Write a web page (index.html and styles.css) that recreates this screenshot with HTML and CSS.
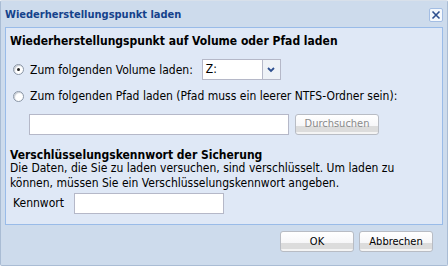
FILE: index.html
```html
<!DOCTYPE html>
<html>
<head>
<meta charset="utf-8">
<link rel="stylesheet" href="styles.css">
</head>
<body>
<div class="window">
  <div class="header">
    <span class="title">Wiederherstellungspunkt laden</span>
    <span class="close"><svg width="10" height="10" viewBox="0 0 10 10"><path d="M1.5 1.5 L8.5 8.5 M8.5 1.5 L1.5 8.5" stroke="#2d4f8f" stroke-width="1.6"/></svg></span>
  </div>
  <div class="panel">
    <div class="heading">Wiederherstellungspunkt auf Volume oder Pfad laden</div>
    <div class="row row1">
      <span class="radio checked"></span>
      <span class="label">Zum folgenden Volume laden:</span>
      <span class="select"><span class="select-val">Z:</span><span class="trigger"><svg width="8" height="6" viewBox="0 0 8 6"><path d="M1 1 L4 4 L7 1" stroke="#2d4f8f" stroke-width="1.8" fill="none"/></svg></span></span>
    </div>
    <div class="row row2">
      <span class="radio"></span>
      <span class="label">Zum folgenden Pfad laden (Pfad muss ein leerer NTFS-Ordner sein):</span>
    </div>
    <div class="row row3">
      <span class="field path"></span>
      <span class="btn disabled">Durchsuchen</span>
    </div>
    <div class="heading2">Verschlüsselungskennwort der Sicherung</div>
    <p class="desc">Die Daten, die Sie zu laden versuchen, sind verschlüsselt. Um laden zu können, müssen Sie ein Verschlüsselungskennwort angeben.</p>
    <div class="row row4">
      <span class="label kw">Kennwort</span>
      <span class="field pw"></span>
    </div>
  </div>
  <div class="footer">
    <span class="btn ok">OK</span>
    <span class="btn cancel">Abbrechen</span>
  </div>
</div>
</body>
</html>
```
FILE: styles.css
```css
html, body { margin: 0; padding: 0; }
body {
  font-family: "DejaVu Sans Condensed", "DejaVu Sans", sans-serif;
  font-size: 12px;
  color: #000;
  background: #fff;
}
.window {
  width: 448px;
  height: 266px;
  box-sizing: border-box;
  background: #cddbec;
  border: 1px solid #a9bcd4;
  border-top-color: #d8e0ea;
  border-radius: 2px;
  display: flex;
  flex-direction: column;
}
.header {
  height: 26px;
  display: flex;
  align-items: center;
  justify-content: space-between;
  padding: 0 4px 0 4px;
}
.title {
  font-weight: bold;
  color: #15428b;
  font-size: 11px;
  margin-top: 1px;
}
.close {
  width: 12px;
  height: 12px;
  border: 1px solid #a3bde3;
  border-radius: 2px;
  background: #f4f8fd;
  display: flex;
  align-items: center;
  justify-content: center;
  margin-top: 2px;
}
.panel {
  margin: 0 4px 0 4px;
  height: 198px;
  box-sizing: border-box;
  border: 1px solid #99bbe8;
  background: #dfe8f6;
  padding: 0 4px;
}
.heading {
  font-weight: bold;
  font-size: 12px;
  margin-top: 5px;
  line-height: 16px;
}
.row { display: flex; align-items: center; }
.row1 { margin-top: 10px; height: 21px; }
.row2 { margin-top: 8px; height: 16px; }
.row3 { margin-top: 9px; height: 22px; padding-left: 19px; }
.radio {
  width: 9px;
  height: 9px;
  border-radius: 50%;
  border: 1px solid #8a96a6;
  background: #fff;
  margin: 0 6px 0 3px;
  position: relative;
  box-shadow: inset 1px 1px 1px #c8cdd4;
}
.radio.checked::after {
  content: "";
  position: absolute;
  left: 3px;
  top: 3px;
  width: 3px;
  height: 3px;
  border-radius: 50%;
  background: #222;
}
.select {
  margin-left: 9px;
  width: 79px;
  height: 21px;
  box-sizing: border-box;
  border: 1px solid #b5b8c8;
  background: #fff;
  display: flex;
}
.select-val { flex: 1; padding-left: 3px; line-height: 19px; }
.trigger {
  width: 17px;
  border-left: 1px solid #b5b8c8;
  background: #eef2f7;
  display: flex;
  align-items: center;
  justify-content: center;
}
.field {
  height: 21px;
  box-sizing: border-box;
  border: 1px solid #b5b8c8;
  background: #fff;
  display: inline-block;
}
.path { width: 260px; }
.btn {
  display: inline-flex;
  align-items: center;
  justify-content: center;
  box-sizing: border-box;
  height: 21px;
  border: 1px solid #b8bcc4;
  border-radius: 3px;
  background: linear-gradient(#ffffff 0, #f6f6f8 60%, #dcdcdc 60%, #dcdcdc 90%, #f4f4f4 90%);
  color: #000;
  padding-bottom: 1px;
  font-size: 11px;
}
.btn.disabled { color: #8a8a8a; width: 84px; margin-left: 6px; }
.heading2 {
  font-weight: bold;
  font-size: 12px;
  margin-top: 15px;
  line-height: 11px;
}
.desc {
  margin: 0;
  line-height: 15px;
}
.row4 { margin-top: 1px; height: 22px; }
.kw { margin-left: 3px; margin-right: 10px; }
.pw { width: 150px; }
.footer {
  display: flex;
  justify-content: flex-end;
  gap: 5px;
  padding: 6px 14px 0 0;
}
.ok, .cancel { width: 74px; }
```
